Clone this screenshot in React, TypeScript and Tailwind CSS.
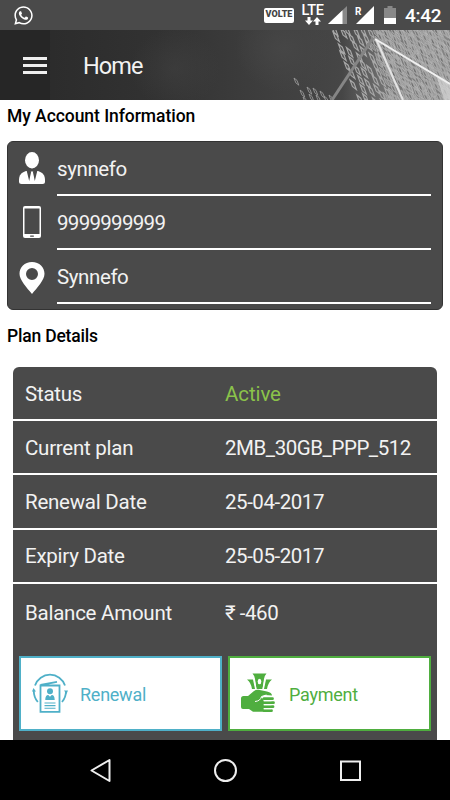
import type { ReactNode } from 'react';
import { FaWhatsapp } from 'react-icons/fa';

const account = [
  { icon: <UserIcon />, value: 'synnefo', spacing: 'tracking-[-0.4px]' },
  { icon: <PhoneIcon />, value: '9999999999', spacing: 'tracking-[-0.7px]' },
  { icon: <PinIcon />, value: 'Synnefo', spacing: 'tracking-[-0.4px]' },
];

const plan = [
  { label: 'Status', value: 'Active', active: true },
  { label: 'Current plan', value: '2MB_30GB_PPP_512' },
  { label: 'Renewal Date', value: '25-04-2017' },
  { label: 'Expiry Date', value: '25-05-2017' },
  { label: 'Balance Amount', value: '₹ -460' },
];

function UserIcon() {
  return (
    <svg width="26" height="32" viewBox="0 0 26 32" fill="#fff">
      <ellipse cx="13" cy="8.2" rx="7" ry="8.2" />
      <path d="M7 19C2 20.500 0 23.500 0 28v1.500Q0 32 2.500 32h21q2.500 0 2.500-2.500V28c0-4.500-2-7.500-7-9z" />
      <path d="M7.500 18h11L15.800 29 14 20.500h-2L10.200 29z" fill="#4a4a4a" />
      <path d="M11.800 19.500h2.400l-.4 2 .9 6.500-1.700 2-1.700-2 .9-6.500z" />
    </svg>
  );
}

function PhoneIcon() {
  return (
    <svg width="18" height="32" viewBox="0 0 18 32">
      <rect width="18" height="32" rx="2" fill="#fff" />
      <rect x="1.500" y="2.500" width="15" height="25.500" fill="#4a4a4a" />
      <rect x="7" y="29.400" width="4" height="1.300" rx=".6" fill="#4a4a4a" />
    </svg>
  );
}

function PinIcon() {
  return (
    <svg className="mt-[2px]" width="26" height="32" viewBox="0 0 26 32">
      <path d="M13 0C5.500 0 .5 5.200.5 11.800.5 18 8 26 13 32c5-6 12.500-14 12.500-20.200C25.500 5.200 20.500 0 13 0zm0 6a6 6 0 1 1 0 12 6 6 0 0 1 0-12z" fill="#fff" fillRule="evenodd" />
    </svg>
  );
}

function RenewalIcon() {
  return (
    <svg width="36" height="40" viewBox="0 0 36 40" fill="none" stroke="#4fb0c8" strokeWidth="1.800">
      <path d="M3 12.500a15.800 15.800 0 0 1 30 0M1.800 18c0 4.500 1.500 8 4 11M34 18c0 4.500-1.500 8-4 11" />
      <path d="M0 18.500 1.500 15 4 18.500zM32 17.500h4L34.500 21z" fill="#4fb0c8" stroke="none" />
      <path d="M8.500 12.500h19v26.300h-19zM8.500 12 25 8.800" />
      <circle cx="18" cy="18.300" r="3" fill="#4fb0c8" stroke="none" />
      <path d="M13.300 27c0-4 1.500-5 3-5l1.700 1.800 1.700-1.800c1.500 0 3 1 3 5z" fill="#4fb0c8" stroke="none" />
      <path d="M12.500 30h11M12.500 32.600h11M12.500 35.200h11" strokeWidth="1.100" />
    </svg>
  );
}

function PaymentIcon() {
  return (
    <svg width="34" height="40" viewBox="0 0 34 40" fill="#4fae3f">
      <path d="M11.500.5h14q-2 2-2.500 5.500L21.500 16h-6L14 6Q13.500 2.500 11.500.5z" />
      <path d="M6 6.500h6l2 9.500h-3Q10 9.500 6 6.500zM31 6.500h-6L23 16h3q1-6.500 5-9.500z" />
      <path d="M13 5.500 15 16M24 5.500 22 16" stroke="#fff" strokeWidth="1" />
      <ellipse cx="18.500" cy="8.500" rx="1.800" ry="2.800" fill="#fff" />
      <path d="M0 25.500q0-2.500 2.500-2.500H7l6-5q2-1.500 4.500-1.200l8.500 1.700q5 1 5 4l-7-.5-4 2.300q3 1.500 3 4v10.500H12L8 36H2q-2 0-2-2z" />
      <path d="M14 28.500q5.500-.5 6.500-5l5-1.500" fill="none" stroke="#fff" strokeWidth="1" />
      <path d="M23 25.700h8.500M23 29.700h9.500M23 33.700h9M23 37.700h7.500" fill="none" stroke="#4fae3f" strokeWidth="2.800" strokeLinecap="round" />
      <path d="M22.500 27.700h8M22.500 31.700h8M22.500 35.700h8" stroke="#fff" strokeWidth="1.100" />
    </svg>
  );
}

// leaning rhombus used by the header artwork
function rhombus(x: number, y: number, s: number) {
  return `M${x} ${y}l${5 * s} ${4 * s}l${3 * s} ${8 * s}l${-5 * s} ${-4 * s}z`;
}

function HeaderArt() {
  const sparse: string[] = [];
  const light: string[] = [];
  const dark: string[] = [];
  for (let row = -18; row < 12; row++) {
    for (let col = -1; col < 26; col++) {
      const noise = Math.abs((row * 37 + col * col * 53 + row * col * 11) % 13);
      const x = 333 + col * 9 + row * 3.4 + (noise % 3);
      const y = 2 + row * 9 + col * 4.5 + (noise % 4);
      if (y < -12 || y > 72 || x > 454 || x < 329 + y * 0.4) continue;
      if (x < 372 && noise === 1) continue;
      sparse.push(rhombus(x, y, 0.8));
      if (x > 370 + y * 0.2) {
        light.push(rhombus(x + 3, y + 1, 0.85));
        light.push(rhombus(x - 2, y + 4, 0.75));
        if (noise > 6) dark.push(rhombus(x + 1, y + 3, 0.5));
      }
    }
  }
  const cluster = [[294, 48], [300, 60], [307, 57], [313, 58], [320, 61], [309, 64], [316, 65], [324, 66], [303, 67], [329, 65]];
  return (
    <svg className="absolute inset-0" width="450" height="70" viewBox="0 0 450 70">
      <defs>
        <linearGradient id="base" x1="0" x2="1">
          <stop offset="0" stopColor="#292929" />
          <stop offset=".35" stopColor="#323232" />
          <stop offset=".55" stopColor="#3c3c3c" />
          <stop offset=".76" stopColor="#464646" />
          <stop offset=".86" stopColor="#747474" />
          <stop offset="1" stopColor="#858585" />
        </linearGradient>
        <radialGradient id="glow">
          <stop offset="0" stopColor="#464646" />
          <stop offset="1" stopColor="#464646" stopOpacity="0" />
        </radialGradient>
      </defs>
      <rect width="450" height="70" fill="url(#base)" />
      <rect width="50" height="70" fill="#262626" />
      <ellipse cx="285" cy="18" rx="50" ry="44" fill="url(#glow)" />
      <ellipse cx="175" cy="38" rx="45" ry="40" fill="url(#glow)" fillOpacity=".4" />
      <path d={light.join('')} fill="#ccc" fillOpacity=".3" stroke="#b8b8b8" strokeWidth=".6" />
      <path d={dark.join('')} fill="#5c5c5c" fillOpacity=".7" />
      <path d={sparse.join('')} fill="#777" fillOpacity=".25" stroke="#a8a8a8" strokeWidth="1.100" />
      <path d={cluster.map(([x, y]) => rhombus(x, y, 0.6)).join('')} fill="none" stroke="#999" strokeWidth=".9" />
      <path d="M437 47 450 54V70H444z" fill="#ddd" fillOpacity=".6" />
      <path d="M332 70 373 8" stroke="#858585" strokeWidth="3" />
      <path d="M376 9 403 70" stroke="#e4e4e4" strokeWidth="2" />
      <path d="M375 9 450 54" stroke="#f0f0f0" strokeWidth="2" />
    </svg>
  );
}

function StatusBar() {
  return (
    <div className="flex h-[30px] shrink-0 items-center bg-[#4a4a4a] pl-[13px] pr-[10px] text-white">
      <FaWhatsapp className="mr-auto size-[21px]" />
      <span className="flex h-[15px] w-[30px] items-center justify-center rounded-[2px] bg-white text-[9px] font-black text-[#444]">
        VOLTE
      </span>
      <div className="ml-[7px] flex w-[23px] flex-col items-center">
        <span className="text-[14.500px] font-medium leading-[12px] tracking-[-0.3px]">LTE</span>
        <svg width="16" height="8" viewBox="0 0 16 8" fill="#fff">
          <path d="M2.500 0h3v3.500H8L4 8 0 3.500h2.500zM10.500 8h3V4.500H16L12 0 8 4.500h2.500z" />
        </svg>
      </div>
      <svg className="ml-1" width="19" height="18" viewBox="0 0 19 18">
        <path d="M19 0v18H0z" fill="#888" />
        <path d="M14.500 4.300V18H0z" fill="#fff" />
      </svg>
      <div className="relative ml-2 h-[19px] w-[19px]">
        <svg width="19" height="19" viewBox="0 0 19 19">
          <path d="M19 0v18H1z" fill="#fff" />
        </svg>
        <span className="absolute left-0 top-[1px] text-[10px] font-bold leading-[10px]">R</span>
      </div>
      <svg className="ml-[10px]" width="12" height="19" viewBox="0 0 12 19">
        <path d="M3.500 0h5v2H12v16H0V2h3.500z" fill="#888" />
        <path d="M0 12h12v6H0z" fill="#fff" />
      </svg>
      <span className="ml-[9px] w-[35px] whitespace-nowrap text-[19px] font-medium leading-none tracking-[-0.3px]">4:42</span>
    </div>
  );
}

function ActionButton({ icon, label, className }: { icon: ReactNode; label: string; className: string }) {
  return (
    <button className={`flex h-[75px] flex-1 items-center border-2 bg-white text-[18px] tracking-[-0.25px] ${className}`}>
      {icon}
      <span className="pt-[2px]">{label}</span>
    </button>
  );
}

export default function App() {
  return (
    <div className="flex h-[800px] w-[450px] flex-col overflow-hidden bg-white font-[Roboto,sans-serif]">
      <StatusBar />

      <header className="relative h-[70px] shrink-0">
        <HeaderArt />
        <div className="relative flex h-full items-center pl-[23px] text-[#f2f2f2]">
          <div className="flex w-6 flex-col gap-1">
            <span className="h-[3px] bg-[#eee]" />
            <span className="h-[3px] bg-[#eee]" />
            <span className="h-[3px] bg-[#eee]" />
          </div>
          <h1 className="ml-9 pt-[3px] text-[23.500px] tracking-[-0.9px]">Home</h1>
        </div>
      </header>

      <main className="flex flex-1 flex-col overflow-hidden">
        <h2 className="ml-[7px] mt-1 text-[17.500px] font-medium leading-6 tracking-[-0.05px] text-black">My Account Information</h2>

        <section className="ml-[7px] mr-[7px] mt-[13px] h-[169px] shrink-0 rounded-md border border-[#333] bg-[#4a4a4a] pl-[11px] pr-[11px]">
          {account.map(row => (
            <div key={row.value} className="flex h-[54px] items-end">
              <div className="flex h-[44px] w-[26px] items-start justify-center">{row.icon}</div>
              <div className={`ml-3 h-[54px] flex-1 border-b-2 border-white pt-[13px] text-[20.500px] leading-[28px] text-[#f2f2f2] ${row.spacing}`}>
                {row.value}
              </div>
            </div>
          ))}
        </section>

        <h2 className="ml-[7px] mt-[14px] text-[17.500px] font-medium leading-6 tracking-[-0.2px] text-black">Plan Details</h2>

        <section className="ml-[13px] mr-[13px] mt-[19px] flex-1 rounded-t-md bg-[#4a4a4a]">
          <div className="divide-y-2 divide-white">
            {plan.map((row, i) => (
              <div
                key={row.label}
                className={`flex items-center pl-3 pt-[2px] text-[20.500px] text-[#f2f2f2] ${i === plan.length - 1 ? 'h-[57px]' : 'h-[54.200px]'}`}
              >
                <span className="w-[200px] tracking-[-0.25px]">{row.label}</span>
                <span className={row.active ? 'tracking-[-0.1px] text-[#8bc34a]' : 'tracking-[-0.45px]'}>{row.value}</span>
              </div>
            ))}
          </div>
          <div className="flex gap-[6px] pl-[6px] pr-[6px] pt-[15px]">
            <ActionButton icon={<RenewalIcon />} label="Renewal" className="gap-3 border-[#4fb0c8] pl-[11px] text-[#4fb0c8]" />
            <ActionButton icon={<PaymentIcon />} label="Payment" className="gap-[14px] border-[#4fae3f] pl-[11px] text-[#4fae3f]" />
          </div>
        </section>
      </main>

      <nav className="flex h-[60px] shrink-0 items-center bg-black">
        <svg width="450" height="60" viewBox="0 0 450 60" fill="none" stroke="#eee" strokeWidth="2">
          <path d="M109.500 20v21L91.500 30.500z" strokeLinejoin="round" />
          <circle cx="225.500" cy="30.500" r="10.500" />
          <path d="M341 21.500h19v18.500h-19z" />
        </svg>
      </nav>
    </div>
  );
}
